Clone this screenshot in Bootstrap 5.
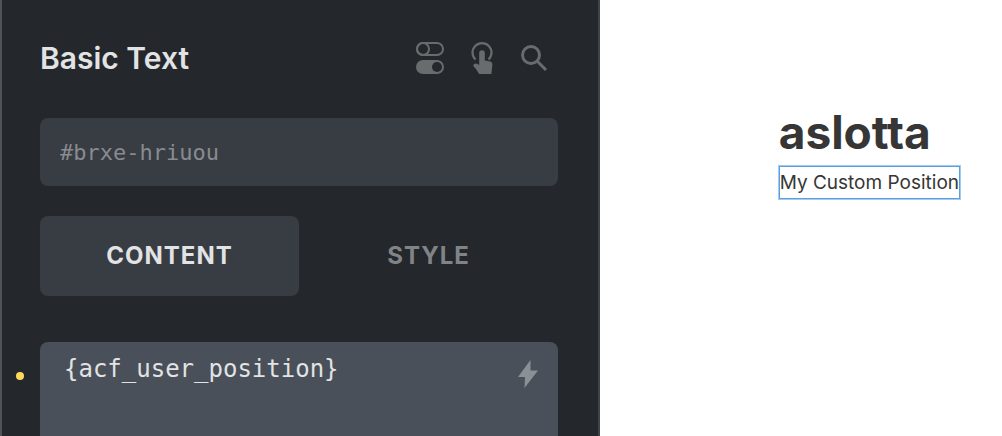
<!DOCTYPE html>
<html lang="en">
<head>
<meta charset="utf-8">
<meta name="viewport" content="width=device-width, initial-scale=1">
<title>Basic Text</title>
<link href="https://cdn.jsdelivr.net/npm/bootstrap@5.3.0/dist/css/bootstrap.min.css" rel="stylesheet">
<style>
  body { font-family: Inter, sans-serif; color: #363636; background: #fff; }
  .panel {
    width: calc(60% - 1px);
    padding: 38px 40px 0 38px;
    background: #24272b;
    border-left: 2px solid #505459;
    border-right: 2px solid #3d444c;
  }
  .panel-title { font-size: 30px; line-height: 40px; font-weight: 600; color: #e1e3e4; }
  .tools { gap: 24px; padding-right: 10px; }
  .tool { color: #696c6f; line-height: 0; }
  .mono { font-family: "DejaVu Sans Mono", monospace; }
  .id-field, .id-field:focus {
    height: 68px; margin-top: 40px; padding: 0 20px;
    font-size: 22px; color: #888b8f; background: #383c43; border-radius: 8px;
  }
  .tabs { margin-top: 30px; }
  .tab-btn, .tab-btn:hover {
    height: 80px; font-size: 24px; font-weight: 700; letter-spacing: 1px;
    color: #808487; border: 0; border-radius: 8px;
  }
  .tab-btn.active { color: #e1e3e4; background: #383c43; }
  .text-wrap { margin-top: 46px; }
  .text-field, .text-field:focus {
    padding: 9px 60px 0 24px; font-size: 24px; line-height: 36px;
    color: #e1e3e4; background: #495059; border-radius: 8px 8px 0 0; resize: none;
  }
  .bolt { top: 17px; right: 18px; color: #8b9095; line-height: 0; }
  .changed-dot { width: 8px; height: 8px; top: 30px; left: -24px; background: #ffd85c; }
  .canvas { padding: 103px 42px 0 0; }
  .user-name { font-size: 46px; line-height: 58px; font-weight: 700; }
  .selected-text {
    font-size: 19px; line-height: 32px; margin-top: 5px; padding: 1px 1px 0;
    outline: 1px solid #5a9fe0; outline-offset: -1px; box-shadow: 0 0 0 1px #a4caee;
  }
</style>
</head>
<body>
<div class="d-flex vh-100 overflow-hidden">
  <aside class="panel d-flex flex-column flex-shrink-0">
    <header class="d-flex align-items-center justify-content-between">
      <h1 class="panel-title m-0">Basic Text</h1>
      <div class="tools d-flex align-items-center">
        <button type="button" class="tool btn p-0 border-0" aria-label="Conditions">
          <svg width="30" height="34" viewBox="0 0 30 34" fill="none" stroke="currentColor" stroke-width="2">
            <rect x="3" y="2" width="26" height="12" rx="6"/><circle cx="9" cy="8" r="6"/>
            <rect x="3" y="20" width="26" height="12" rx="6" fill="currentColor"/><circle cx="23" cy="26" r="5" fill="#24272b" stroke="none"/>
          </svg>
        </button>
        <button type="button" class="tool btn p-0 border-0" aria-label="Interactions">
          <svg width="28" height="34" viewBox="0 0 28 34">
            <path d="M7.500 18.500A9.500 9.500 0 1 1 20.500 18.500" fill="none" stroke="currentColor" stroke-width="2.200"/>
            <path d="M11.200 12a2.800 2.800 0 0 1 5.600 0v7.500l5.500 1.100q2.300.5 2.100 2.800l-1 9.600H11.200q-1-1.200-1.900-2.900Q8.200 28 5.700 25.500q-1-1 0-2.100 1.500-1.600 3.600-.3l1.900 1z" fill="currentColor"/>
          </svg>
        </button>
        <button type="button" class="tool btn p-0 border-0" aria-label="Search">
          <svg width="28" height="34" viewBox="0 0 28 34" fill="none" stroke="currentColor" stroke-width="3">
            <circle cx="11" cy="14" r="8.500"/><path d="M17 20l9 9"/>
          </svg>
        </button>
      </div>
    </header>
    <input type="text" class="id-field mono form-control border-0 shadow-none" value="#brxe-hriuou" aria-label="Element ID" spellcheck="false">
    <div class="tabs d-flex" role="tablist">
      <button type="button" role="tab" aria-selected="true" class="tab-btn btn active w-50 p-0">CONTENT</button>
      <button type="button" role="tab" aria-selected="false" class="tab-btn btn w-50 p-0">STYLE</button>
    </div>
    <div class="text-wrap position-relative flex-grow-1">
      <span class="changed-dot position-absolute rounded-circle"></span>
      <textarea class="text-field mono form-control border-0 shadow-none h-100" aria-label="Text" spellcheck="false">{acf_user_position}</textarea>
      <button type="button" class="bolt btn p-0 border-0 position-absolute" aria-label="Dynamic data">
        <svg width="24" height="30" viewBox="0 0 24 30"><path d="M14.500 1L2 18h7L8.500 29 22 11.500h-7.500z" fill="currentColor"/></svg>
      </button>
    </div>
  </aside>
  <main class="canvas flex-grow-1 d-flex justify-content-end align-items-start">
    <div>
      <h2 class="user-name mb-0">aslotta</h2>
      <p class="selected-text mb-0 text-nowrap">My Custom Position</p>
    </div>
  </main>
</div>
<script src="https://cdn.jsdelivr.net/npm/bootstrap@5.3.0/dist/js/bootstrap.bundle.min.js"></script>
</body>
</html>
